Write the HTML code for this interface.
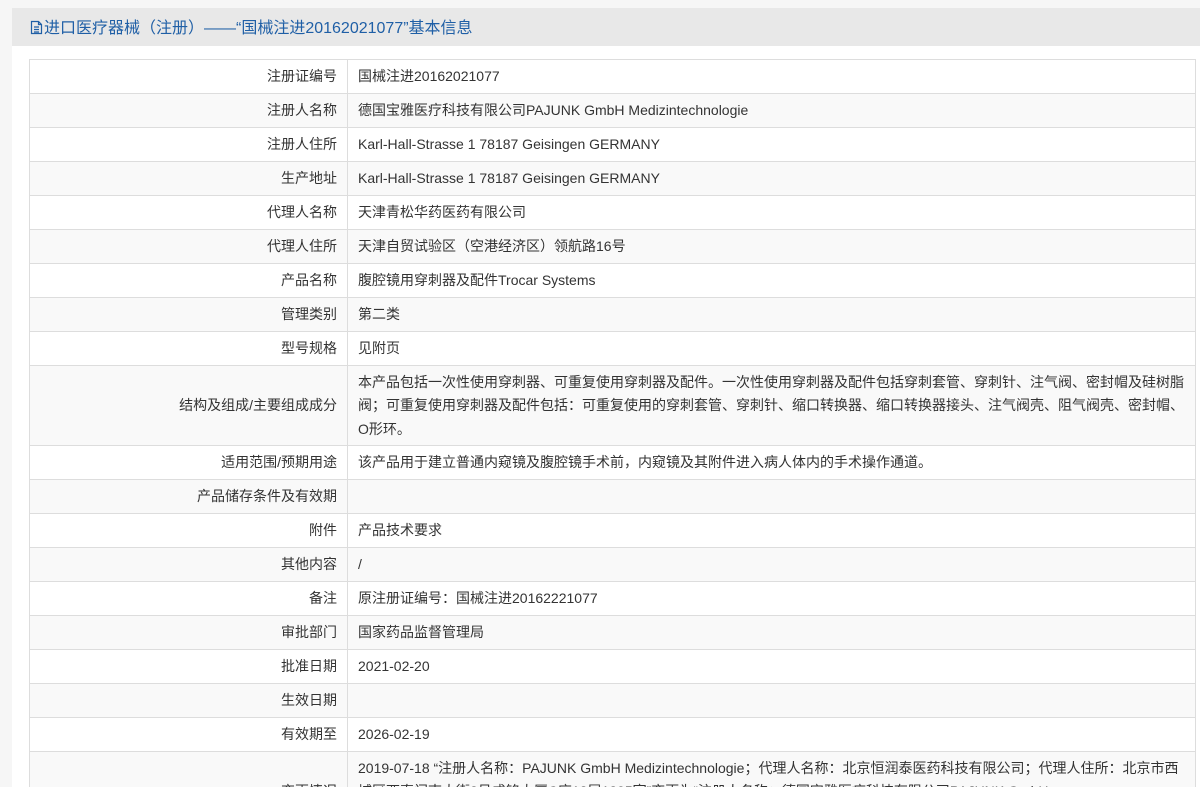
<!DOCTYPE html>
<html><head><meta charset="utf-8"><style>
html,body{margin:0;padding:0;background:#f6f6f6;width:1200px;height:787px;overflow:hidden;font-family:"Liberation Sans","Noto Sans CJK SC",sans-serif;}
.panel{position:absolute;left:12px;top:8px;width:1188px;height:779px;background:#fff;overflow:hidden;}
.hd{height:38px;background:#e8e8e8;color:#1f5fa6;font-size:16px;line-height:41px;padding-left:18px;}
.hd svg{vertical-align:-2px;margin-right:1px}
table{position:absolute;left:17px;top:51px;width:1167px;border-collapse:collapse;font-size:14px;color:#333;}
td{border:1px solid #ddd;padding:1px 10px 0;height:32px;line-height:23.5px;}
td.l{width:297px;text-align:right;}
tr:nth-child(even) td{background:#f9f9f9;}
</style></head><body>
<div class="panel">
<div class="hd"><svg width="13" height="15" viewBox="0 0 13 15"><path d="M1.5 1.5h7l3 3v9h-10z M8.5 1.5v3h3 M4 7h5 M4 9.5h5 M4 12h5" fill="none" stroke="#1f5fa6" stroke-width="1.2"/></svg>进口医疗器械（注册）——“国械注进20162021077”基本信息</div>
<table>
<tr><td class="l">注册证编号</td><td>国械注进20162021077</td></tr>
<tr><td class="l">注册人名称</td><td>德国宝雅医疗科技有限公司PAJUNK GmbH Medizintechnologie</td></tr>
<tr><td class="l">注册人住所</td><td>Karl-Hall-Strasse 1 78187 Geisingen GERMANY</td></tr>
<tr><td class="l">生产地址</td><td>Karl-Hall-Strasse 1 78187 Geisingen GERMANY</td></tr>
<tr><td class="l">代理人名称</td><td>天津青松华药医药有限公司</td></tr>
<tr><td class="l">代理人住所</td><td>天津自贸试验区（空港经济区）领航路16号</td></tr>
<tr><td class="l">产品名称</td><td>腹腔镜用穿刺器及配件Trocar Systems</td></tr>
<tr><td class="l">管理类别</td><td>第二类</td></tr>
<tr><td class="l">型号规格</td><td>见附页</td></tr>
<tr><td class="l" style="height:78px">结构及组成/主要组成成分</td><td>本产品包括一次性使用穿刺器、可重复使用穿刺器及配件。一次性使用穿刺器及配件包括穿刺套管、穿刺针、注气阀、密封帽及硅树脂阀；可重复使用穿刺器及配件包括：可重复使用的穿刺套管、穿刺针、缩口转换器、缩口转换器接头、注气阀壳、阻气阀壳、密封帽、O形环。</td></tr>
<tr><td class="l">适用范围/预期用途</td><td>该产品用于建立普通内窥镜及腹腔镜手术前，内窥镜及其附件进入病人体内的手术操作通道。</td></tr>
<tr><td class="l">产品储存条件及有效期</td><td></td></tr>
<tr><td class="l">附件</td><td>产品技术要求</td></tr>
<tr><td class="l">其他内容</td><td>/</td></tr>
<tr><td class="l">备注</td><td>原注册证编号：国械注进20162221077</td></tr>
<tr><td class="l">审批部门</td><td>国家药品监督管理局</td></tr>
<tr><td class="l">批准日期</td><td>2021-02-20</td></tr>
<tr><td class="l">生效日期</td><td></td></tr>
<tr><td class="l">有效期至</td><td>2026-02-19</td></tr>
<tr><td class="l" style="height:78px">变更情况</td><td>2019-07-18 “注册人名称：PAJUNK GmbH Medizintechnologie；代理人名称：北京恒润泰医药科技有限公司；代理人住所：北京市西城区西直门南大街2号成铭大厦C座12层1205室”变更为“注册人名称：德国宝雅医疗科技有限公司PAJUNK GmbH Medizintechnologie”。</td></tr>
</table>
</div>
</body></html>
